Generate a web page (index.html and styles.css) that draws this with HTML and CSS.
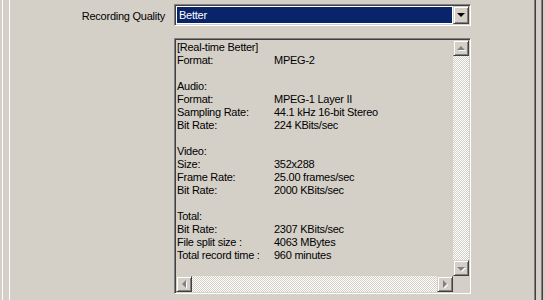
FILE: index.html
```html
<!DOCTYPE html>
<html lang="en">
<head>
    <meta charset="UTF-8">
    <title>Recording Quality</title>
    <link rel="stylesheet" href="styles.css">
</head>
<body>
    <div class="frame">
        <div class="panel">
            <!-- Quality selector -->
            <div class="label">Recording Quality</div>
            <div class="combo">
                <div class="combo-field"><span class="combo-value">Better</span></div>
                <div class="btn combo-btn"><span class="arrow arrow-down arrow-dark"></span></div>
            </div>

            <!-- Details of the selected profile -->
            <div></div>
            <div class="listbox">
                <div class="lb-text">
                    <div class="line">[Real-time Better]</div>
                    <div class="line"><span class="key">Format:</span><span>MPEG-2</span></div>
                    <div class="line"></div>
                    <div class="line">Audio:</div>
                    <div class="line"><span class="key">Format:</span><span>MPEG-1 Layer II</span></div>
                    <div class="line"><span class="key">Sampling Rate:</span><span>44.1 kHz 16-bit Stereo</span></div>
                    <div class="line"><span class="key">Bit Rate:</span><span>224 KBits/sec</span></div>
                    <div class="line"></div>
                    <div class="line">Video:</div>
                    <div class="line"><span class="key">Size:</span><span>352x288</span></div>
                    <div class="line"><span class="key">Frame Rate:</span><span>25.00 frames/sec</span></div>
                    <div class="line"><span class="key">Bit Rate:</span><span>2000 KBits/sec</span></div>
                    <div class="line"></div>
                    <div class="line">Total:</div>
                    <div class="line"><span class="key">Bit Rate:</span><span>2307 KBits/sec</span></div>
                    <div class="line"><span class="key">File split size :</span><span>4063 MBytes</span></div>
                    <div class="line"><span class="key">Total record time :</span><span>960 minutes</span></div>
                </div>
                <div class="vscroll">
                    <div class="btn sb-btn"><span class="arrow arrow-up"></span></div>
                    <div class="track"></div>
                    <div class="btn sb-btn"><span class="arrow arrow-down"></span></div>
                </div>
                <div class="hscroll">
                    <div class="btn sb-btn"><span class="arrow arrow-left"></span></div>
                    <div class="track"></div>
                    <div class="btn sb-btn"><span class="arrow arrow-right"></span></div>
                </div>
                <div class="corner"></div>
            </div>
        </div>
    </div>
</body>
</html>
```

FILE: styles.css
```css
body {
    margin: 0;
    height: 300px;
    overflow: hidden;
    background-color: #d4d0c8;
    font-family: "Liberation Sans", Arial, sans-serif;
    font-size: 11px;
    letter-spacing: -0.25px;
    color: #000;
}

.frame {
    box-sizing: border-box;
    width: 541px;
    height: 300px;
    margin-left: 2px;
    padding: 0 6px;
    border-left: 1px solid #fff;
    border-right: 1px solid #404040;
    box-shadow: inset -1px 0 #808080;
}

.panel {
    box-sizing: border-box;
    height: 300px;
    padding-top: 4px;
    border-left: 1px solid #fff;
    border-right: 1px solid #404040;
    box-shadow: inset -1px 0 #808080;
    display: grid;
    grid-template-columns: 156px 297px;
    grid-template-rows: 22px 256px;
    column-gap: 8px;
    row-gap: 12px;
    align-content: start;
}

.label {
    text-align: right;
    align-self: center;
    padding-right: 1px;
    padding-top: 1px;
}

/* sunken 3d edge */
.combo,
.listbox {
    box-sizing: border-box;
    border: 1px solid;
    border-color: #808080 #fff #fff #808080;
    box-shadow: inset 1px 1px #404040, inset -1px -1px #d4d0c8;
    padding: 1px;
}

.combo {
    display: flex;
    height: 22px;
}

.combo-field {
    flex: 1;
    background-color: #fff;
    padding: 1px;
    display: flex;
}

.combo-value {
    flex: 1;
    background-color: #0a246a;
    color: #fff;
    line-height: 16px;
    padding-left: 2px;
}

/* raised 3d edge */
.btn {
    box-sizing: border-box;
    width: 16px;
    height: 16px;
    background-color: #d4d0c8;
    border: 1px solid;
    border-color: #d4d0c8 #404040 #404040 #d4d0c8;
    box-shadow: inset 1px 1px #fff, inset -1px -1px #808080;
    display: flex;
    align-items: center;
    justify-content: center;
}

.combo-btn {
    height: 18px;
}

.arrow {
    width: 0;
    height: 0;
    border-style: solid;
    border-color: transparent;
}

.arrow-down {
    border-width: 4px 4px 0 4px;
    border-top-color: #808080;
    filter: drop-shadow(1px 1px 0 #fff);
    margin-top: 1px;
}

.arrow-up {
    border-width: 0 4px 4px 4px;
    border-bottom-color: #808080;
    filter: drop-shadow(1px 1px 0 #fff);
    margin-top: -1px;
}

.arrow-left {
    border-width: 4px 4px 4px 0;
    border-right-color: #808080;
    filter: drop-shadow(1px 1px 0 #fff);
    margin-left: -1px;
}

.arrow-right {
    border-width: 4px 0 4px 4px;
    border-left-color: #808080;
    filter: drop-shadow(1px 1px 0 #fff);
}

.arrow-dark {
    border-top-color: #000;
    filter: none;
    margin-top: 0;
}

.listbox {
    height: 256px;
    display: grid;
    grid-template-columns: 277px 16px;
    grid-template-rows: 236px 16px;
}

.lb-text {
    padding: 1px 0 0 1px;
    overflow: hidden;
}

.line {
    height: 13px;
    line-height: 13px;
    white-space: nowrap;
    display: flex;
}

.key {
    width: 97px;
}

.vscroll {
    display: flex;
    flex-direction: column;
}

.hscroll {
    display: flex;
}

.track {
    flex: 1;
    background-image: repeating-conic-gradient(#fff 0 25%, #d4d0c8 0 50%);
    background-size: 2px 2px;
}

.corner {
    background-color: #d4d0c8;
}
```
